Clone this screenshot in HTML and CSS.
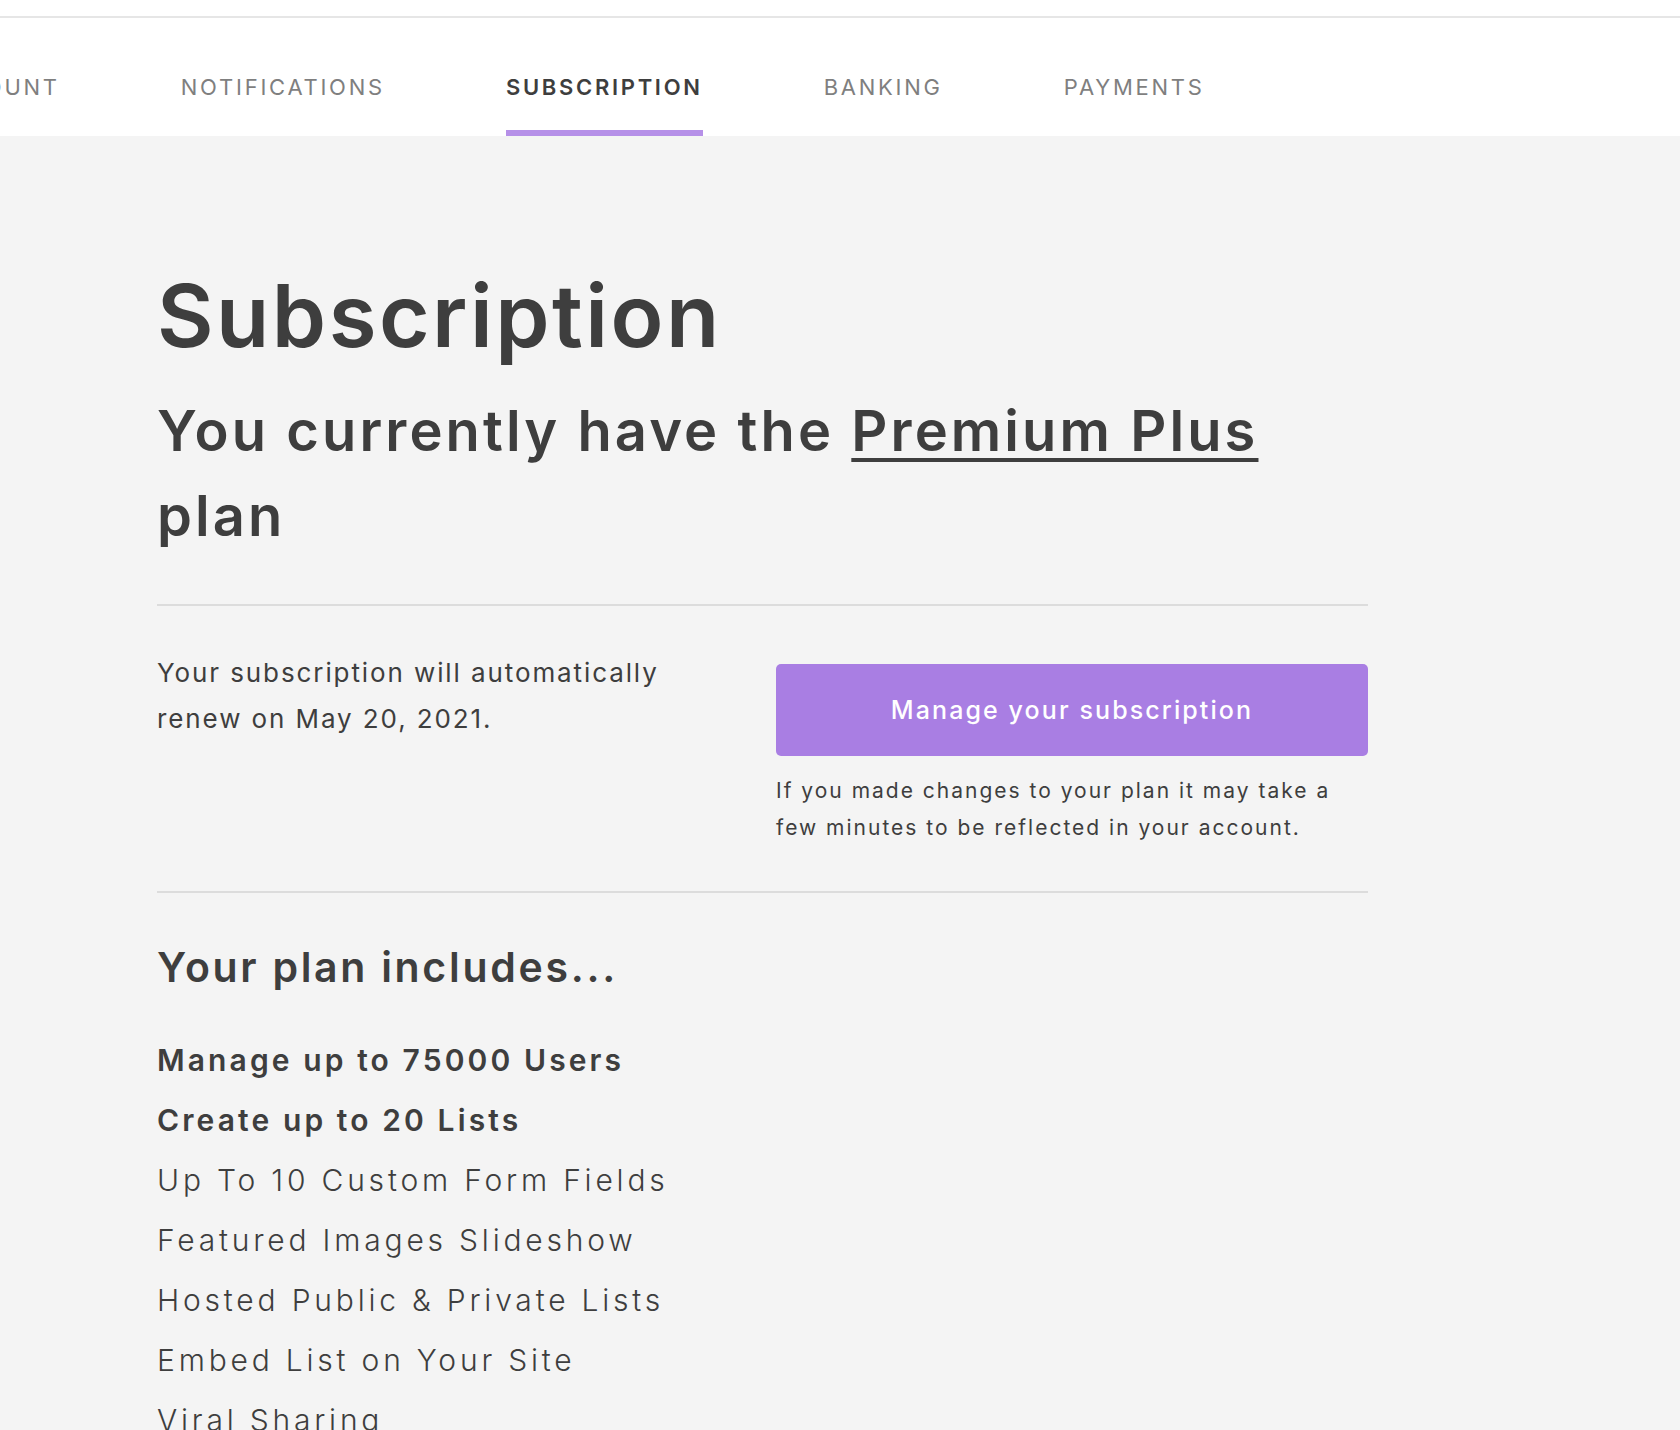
FILE: index.html
```html
<!DOCTYPE html>
<html lang="en">
<head>
<meta charset="utf-8">
<title>Subscription</title>
<link rel="stylesheet" href="styles.css">
</head>
<body>
<div class="topline"></div>
<nav class="tabs">
  <ul class="tab-list">
    <li class="tab">ACCOUNT</li>
    <li class="tab">NOTIFICATIONS</li>
    <li class="tab active">SUBSCRIPTION</li>
    <li class="tab">BANKING</li>
    <li class="tab">PAYMENTS</li>
  </ul>
</nav>
<main class="content">
  <h1 class="title">Subscription</h1>
  <h2 class="plan">You currently have the <a class="plan-link" href="#">Premium Plus</a> plan</h2>
  <hr class="divider divider-top">
  <section class="renew-row">
    <p class="renew-text">Your subscription will automatically renew on May 20, 2021.</p>
    <div class="manage">
      <a class="btn" href="#">Manage your subscription</a>
      <p class="note">If you made changes to your plan it may take a few minutes to be reflected in your account.</p>
    </div>
  </section>
  <hr class="divider">
  <h3 class="includes">Your plan includes...</h3>
  <ul class="features">
    <li class="feature strong">Manage up to 75000 Users</li>
    <li class="feature strong">Create up to 20 Lists</li>
    <li class="feature">Up To 10 Custom Form Fields</li>
    <li class="feature">Featured Images Slideshow</li>
    <li class="feature">Hosted Public &amp; Private Lists</li>
    <li class="feature">Embed List on Your Site</li>
    <li class="feature">Viral Sharing</li>
  </ul>
</main>
</body>
</html>
```

FILE: styles.css
```css
html, body {
  margin: 0;
  padding: 0;
}
body {
  background: #f4f4f4;
  color: #3e3e3e;
  font-family: "Inter", "Open Sans", sans-serif;
  height: 1430px;
  overflow: hidden;
}
.topline {
  height: 16px;
  background: #ffffff;
  border-bottom: 2px solid #e6e6e6;
}
.tabs {
  background: #ffffff;
  height: 118px;
  overflow: hidden;
}
.tab-list {
  list-style: none;
  margin: 0 0 0 -70px;
  padding: 0;
  display: flex;
  gap: 121px;
  height: 118px;
}
.tab {
  box-sizing: border-box;
  height: 118px;
  padding-top: 56px;
  font-size: 22px;
  line-height: 26px;
  font-weight: 400;
  letter-spacing: 2.75px;
  color: #7f7f7f;
  border-bottom: 6px solid transparent;
  white-space: nowrap;
}
.tab.active {
  color: #3e3e3e;
  font-weight: 600;
  letter-spacing: 2.7px;
  border-bottom-color: #b690e8;
}
.content {
  width: 1211px;
  padding: 130px 0 0 157px;
}
.title {
  margin: 0;
  font-size: 87px;
  line-height: 100px;
  font-weight: 600;
  letter-spacing: 2.5px;
}
.plan {
  margin: 23px 0 0;
  font-size: 56px;
  line-height: 85px;
  font-weight: 600;
  letter-spacing: 3.1px;
  width: 1150px;
}
.plan-link {
  color: inherit;
  text-decoration: underline;
  text-decoration-thickness: 4px;
  text-underline-offset: 7px;
}
.divider {
  margin: 0;
  border: 0;
  height: 2px;
  background: #dcdcdc;
}
.divider-top {
  margin-top: 45px;
}
.renew-row {
  display: grid;
  grid-template-columns: 1fr 592px;
  column-gap: 27px;
  padding: 44px 0 45px;
}
.renew-text {
  margin: 0;
  font-size: 26px;
  line-height: 46px;
  font-weight: 400;
  letter-spacing: 1.9px;
  max-width: 540px;
}
.manage {
  padding-top: 14px;
}
.btn {
  display: flex;
  align-items: center;
  justify-content: center;
  height: 92px;
  border-radius: 5px;
  background: #a97ee3;
  color: #ffffff;
  text-decoration: none;
  font-size: 25px;
  font-weight: 500;
  letter-spacing: 2.1px;
}
.note {
  margin: 16px 0 0;
  font-size: 21px;
  line-height: 37px;
  letter-spacing: 2px;
}
.includes {
  margin: 49px 0 0;
  font-size: 41px;
  line-height: 50px;
  font-weight: 600;
  letter-spacing: 2.7px;
}
.features {
  list-style: none;
  margin: 38px 0 0;
  padding: 0;
}
.feature {
  font-size: 30px;
  line-height: 60px;
  font-weight: 300;
  letter-spacing: 3.8px;
}
.feature.strong {
  font-weight: 600;
  letter-spacing: 3.1px;
}
```
